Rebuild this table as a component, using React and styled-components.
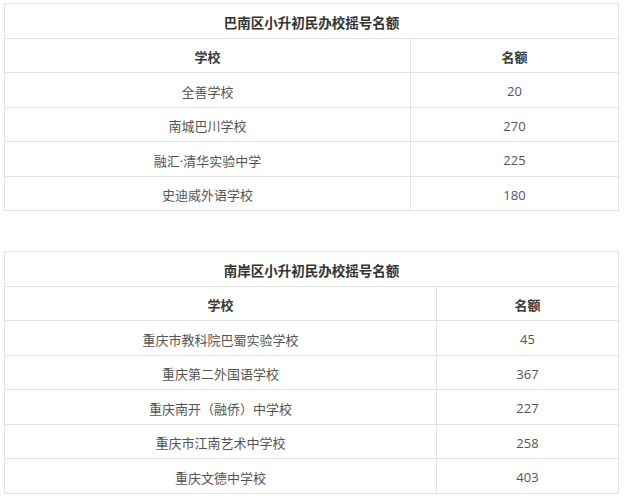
import React from 'react';
import styled, { createGlobalStyle } from 'styled-components';

const GlobalStyle = createGlobalStyle`
  body {
    margin: 0;
    background: #fff;
    font-family: "Open Sans", "Noto Sans CJK SC", sans-serif;
  }
`;

const Page = styled.div`
  padding: 3px 6px 0 4px;
`;

const Table = styled.table`
  width: 615px;
  border-collapse: collapse;
  margin-bottom: ${(p) => (p.last ? '0' : '40px')};
  table-layout: fixed;

  td,
  th {
    border: 1px solid #e2e2e2;
    text-align: center;
    padding: 3px 0 0;
    height: 30.5px;
    font-size: 13px;
  }
`;

const TitleCell = styled.th`
  font-weight: bold;
  font-size: 13.5px !important;
  color: #333;
`;

const HeadCell = styled.th`
  font-weight: bold;
  color: #3a3a3a;
`;

const Cell = styled.td`
  color: #555;
  font-weight: normal;
`;

const tables = [
  {
    title: '巴南区小升初民办校摇号名额',
    split: 406,
    rows: [
      ['全善学校', '20'],
      ['南城巴川学校', '270'],
      ['融汇·清华实验中学', '225'],
      ['史迪威外语学校', '180'],
    ],
  },
  {
    title: '南岸区小升初民办校摇号名额',
    split: 432,
    rows: [
      ['重庆市教科院巴蜀实验学校', '45'],
      ['重庆第二外国语学校', '367'],
      ['重庆南开（融侨）中学校', '227'],
      ['重庆市江南艺术中学校', '258'],
      ['重庆文德中学校', '403'],
    ],
  },
];

export default function App() {
  return (
    <>
      <GlobalStyle />
      <Page>
        {tables.map((t, i) => (
          <Table key={t.title} last={i === tables.length - 1}>
            <colgroup>
              <col style={{ width: t.split }} />
              <col />
            </colgroup>
            <thead>
              <tr>
                <TitleCell colSpan={2}>{t.title}</TitleCell>
              </tr>
              <tr>
                <HeadCell>学校</HeadCell>
                <HeadCell>名额</HeadCell>
              </tr>
            </thead>
            <tbody>
              {t.rows.map((r) => (
                <tr key={r[0]}>
                  <Cell>{r[0]}</Cell>
                  <Cell>{r[1]}</Cell>
                </tr>
              ))}
            </tbody>
          </Table>
        ))}
      </Page>
    </>
  );
}
